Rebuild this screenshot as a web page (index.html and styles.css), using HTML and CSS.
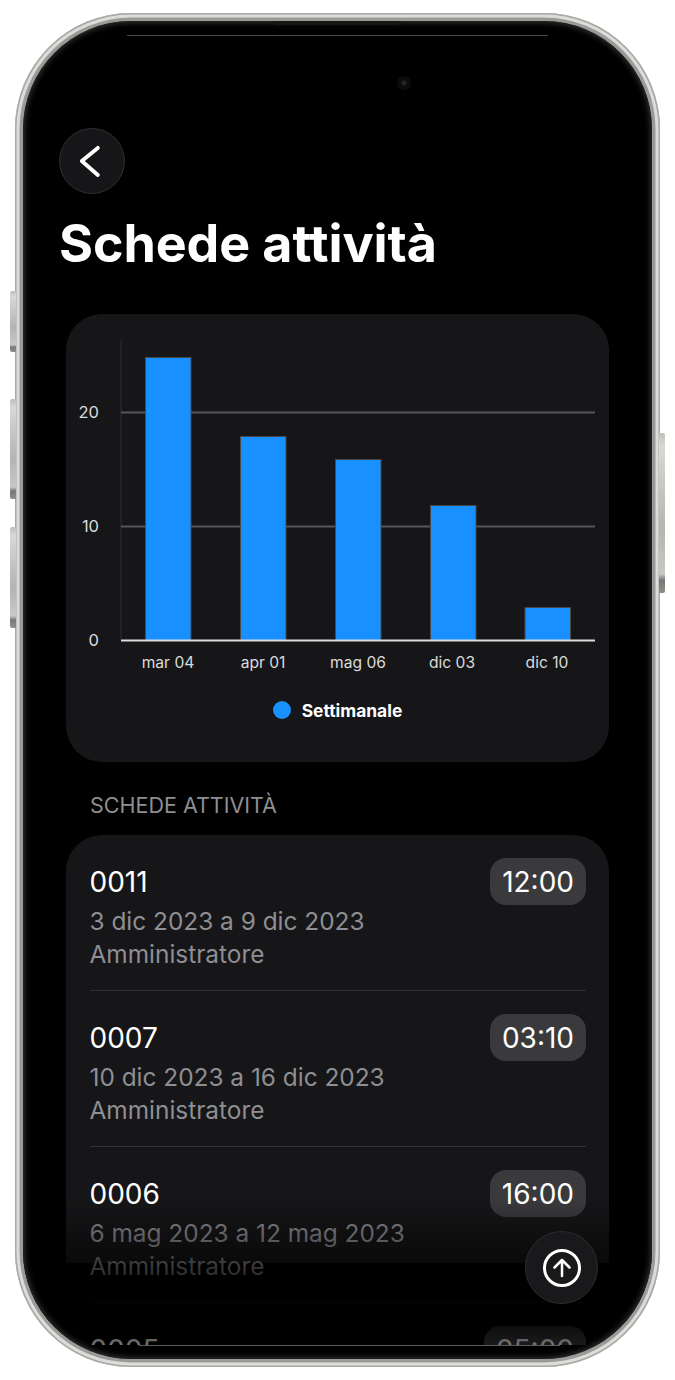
FILE: index.html
```html
<!DOCTYPE html>
<html lang="it">
<head>
<meta charset="utf-8">
<title>Schede attività</title>
<link rel="stylesheet" href="styles.css">
</head>
<body>
<div class="phone">
  <span class="side side-a"></span>
  <span class="side side-b"></span>
  <span class="side side-c"></span>
  <span class="side side-d"></span>
  <div class="screen">
    <span class="notch"></span>
    <span class="top-line"></span>
    <span class="camera"></span>
    <main class="content">
      <button class="back" aria-label="Indietro">
        <svg class="back-icon" viewBox="0 0 66 66"><path d="M39 19.5 22.500 33 39 47.500"/></svg>
      </button>
      <h1 class="title">Schede attività</h1>
      <section class="card chart-card">
        <svg class="chart" viewBox="0 0 543 384">
          <line class="axis-y" x1="55" y1="26" x2="55" y2="326"/>
          <line class="grid" x1="55" y1="98.500" x2="529" y2="98.500"/>
          <line class="grid" x1="55" y1="212.500" x2="529" y2="212.500"/>
          <rect class="bar" x="79.500" y="43.500" width="45.500" height="283"/>
          <rect class="bar" x="174.500" y="122.500" width="45.500" height="204"/>
          <rect class="bar" x="269.500" y="145.500" width="45.500" height="181"/>
          <rect class="bar" x="364.500" y="191.500" width="45.500" height="135"/>
          <rect class="bar" x="459" y="293.500" width="45.500" height="33"/>
          <line class="baseline" x1="55" y1="326.500" x2="529" y2="326.500"/>
          <text class="tick-y end" x="33" y="104">20</text>
          <text class="tick-y end" x="33" y="218">10</text>
          <text class="tick-y end" x="33" y="332">0</text>
          <text class="tick mid" x="102" y="354">mar 04</text>
          <text class="tick mid" x="197" y="354">apr 01</text>
          <text class="tick mid" x="292" y="354">mag 06</text>
          <text class="tick mid" x="386" y="354">dic 03</text>
          <text class="tick mid" x="481" y="354">dic 10</text>
        </svg>
        <div class="legend"><span class="dot"></span><span class="legend-text">Settimanale</span></div>
      </section>
      <h2 class="section-label">SCHEDE ATTIVITÀ</h2>
      <section class="card list-card">
        <article class="row">
          <div class="row-text"><div class="num">0011</div><div class="sub">3 dic 2023 a 9 dic 2023</div><div class="sub">Amministratore</div></div>
          <span class="badge">12:00</span>
        </article>
        <article class="row">
          <div class="row-text"><div class="num">0007</div><div class="sub">10 dic 2023 a 16 dic 2023</div><div class="sub">Amministratore</div></div>
          <span class="badge">03:10</span>
        </article>
        <article class="row">
          <div class="row-text"><div class="num">0006</div><div class="sub">6 mag 2023 a 12 mag 2023</div><div class="sub">Amministratore</div></div>
          <span class="badge">16:00</span>
        </article>
        <article class="row">
          <div class="row-text"><div class="num">0005</div></div>
          <span class="badge">05:00</span>
        </article>
      </section>
      <div class="fade"></div>
      <button class="up" aria-label="Torna su">
        <svg class="up-icon" viewBox="0 0 40 40"><circle class="up-ring" cx="20" cy="20" r="17.500"/><path class="up-arrow" d="M20 28V12.500M12.500 19.500 20 12 27.500 19.500"/></svg>
      </button>
    </main>
    <span class="bottom-line"></span>
  </div>
</div>
</body>
</html>
```
FILE: styles.css
```css
* { box-sizing: border-box; }
html, body { margin: 0; padding: 0; background: #fff; }
body { font-family: Inter, "Noto Sans", sans-serif; color: #fff; height: 1380px; overflow: hidden; }

.phone {
  position: relative;
  width: 645px;
  height: 1354px;
  margin: 13px 0 0 15px;
  padding: 8px;
  border-radius: 116px;
  background: #9a9a98;
  box-shadow: inset 0 0 0 1.5px #a8a8a6, inset 0 0 0 4.5px #dcdcd8;
}
.side { position: absolute; width: 6px; background: linear-gradient(#bdbdba, #d8d8d4 8%, #b4b4b2 60%, #c8c8c5 88%, #777 92%, #8f8f8d); border-radius: 2px 0 0 2px; }
.side-a { left: -5px; top: 278px; height: 61px; }
.side-b { left: -5px; top: 386px; height: 100px; }
.side-c { left: -5px; top: 514px; height: 101px; }
.side-d { right: -5px; top: 420px; height: 160px; border-radius: 0 2px 2px 0; }

.screen {
  position: relative;
  height: 100%;
  border-radius: 108px;
  background: #000;
  overflow: hidden;
}
.screen::after {
  content: "";
  position: absolute;
  inset: 0;
  border-radius: 108px;
  box-shadow: inset 0 0 6px 1px #3c3c3c;
  pointer-events: none;
}
.notch { position: absolute; left: 251px; top: 0; width: 127px; height: 4px; background: #161616; border-radius: 0 0 4px 4px; z-index: 2; }
.top-line { position: absolute; left: 104px; top: 13.500px; width: 421px; height: 1.500px; background: #484848; z-index: 2; }
.bottom-line { position: absolute; left: 116px; top: 1323.500px; width: 421px; height: 1.500px; background: #5c5c5c; }
.camera { position: absolute; left: 374px; top: 55px; width: 14px; height: 14px; border-radius: 50%; background: radial-gradient(circle, #242424 0 2px, #0c0c0c 3px 7px); z-index: 2; }

.content {
  position: relative;
  height: 1324px;
  padding-top: 107px;
  overflow: hidden;
}
.back {
  display: block;
  width: 66px;
  height: 66px;
  margin: 0 0 0 36px;
  padding: 0;
  border: 1px solid #303032;
  border-radius: 50%;
  background: #161618;
}
.back-icon { display: block; width: 64px; height: 64px; fill: none; stroke: #fff; stroke-width: 4; stroke-linecap: round; stroke-linejoin: round; }
.title {
  margin: 18px 0 -1px 36px;
  font-size: 52px;
  line-height: 64px;
  font-weight: 700;
  letter-spacing: -0.1px;
}
.card { margin: 0 43px; background: #161618; border-radius: 36px; }
.chart-card { margin-top: 39px; height: 448px; }
.chart { display: block; width: 543px; height: 384px; }
.axis-y { stroke: #2e2e30; stroke-width: 1; }
.grid { stroke: #565658; stroke-width: 2; }
.baseline { stroke: #dcdcdc; stroke-width: 2; }
.bar { fill: #1890ff; stroke: #48484a; stroke-width: 1; }
.tick { font-family: Inter, sans-serif; font-size: 15.6px; fill: #dcdcdc; }
.tick-y { font-family: Inter, sans-serif; font-size: 16.5px; fill: #dcdcdc; }
.end { text-anchor: end; }
.mid { text-anchor: middle; }
.legend { display: flex; align-items: center; justify-content: center; gap: 11px; height: 24px; }
.dot { width: 18px; height: 18px; border-radius: 50%; background: #1890ff; }
.legend-text { font-size: 17.4px; font-weight: 700; }
.section-label {
  margin: 31px 0 18px 67px;
  font-size: 21.5px;
  line-height: 24px;
  font-weight: 400;
  color: #8e8e93;
}
.list-card {
  height: 700px;
  background: linear-gradient(#161618 0 428px, transparent 428px);
  padding: 0 23px 0 23.500px;
}
.row {
  display: flex;
  justify-content: space-between;
  align-items: flex-start;
  height: 156px;
  padding-top: 23px;
  border-bottom: 1px solid #323234;
}
.row-text { min-width: 0; }
.num { font-size: 28px; line-height: 48px; height: 47px; }
.sub { font-size: 24.4px; line-height: 33px; color: #8e8e93; }
.badge {
  display: block;
  height: 47px;
  padding: 0 12px;
  border-radius: 16px;
  background: #3a3a3c;
  font-size: 28px;
  line-height: 48px;
}
.fade {
  position: absolute;
  left: 0;
  right: 0;
  bottom: 0;
  height: 145px;
  background: linear-gradient(rgba(0,0,0,0) 0, rgba(0,0,0,.6) 45%, rgba(0,0,0,.96) 75%, rgba(0,0,0,.55) 100%);
  pointer-events: none;
}
.up {
  position: absolute;
  left: 502px;
  top: 1210px;
  width: 73px;
  height: 73px;
  padding: 0;
  display: flex;
  align-items: center;
  justify-content: center;
  border: 1px solid #2e2e30;
  border-radius: 50%;
  background: #19191b;
}
.up-icon { width: 40px; height: 40px; fill: none; stroke: #fff; stroke-linecap: round; stroke-linejoin: round; }
.up-ring { stroke-width: 3; }
.up-arrow { stroke-width: 2.500; }
```
